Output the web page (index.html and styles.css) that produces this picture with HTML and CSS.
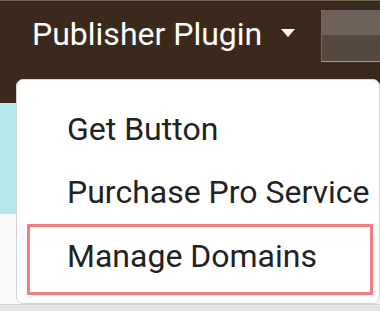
FILE: index.html
```html
<!DOCTYPE html>
<html lang="en">
<head>
  <meta charset="UTF-8" />
  <meta name="viewport" content="width=device-width, initial-scale=1" />
  <title>Publisher Plugin</title>
  <link rel="stylesheet" href="styles.css">
</head>
<body>
  <header class="topbar">
    <div class="title">
      <span>Publisher Plugin</span>
      <span class="caret"></span>
    </div>
    <div class="account"></div>
  </header>
  <main class="page">
    <div class="banner"></div>
    <div class="footer-strip"></div>
  </main>

  <nav class="dropdown">
    <a href="#" class="dropdown-item">Get Button</a>
    <a href="#" class="dropdown-item">Purchase Pro Service</a>
    <a href="#" class="dropdown-item highlighted">Manage Domains</a>
  </nav>
</body>
</html>
```

FILE: styles.css
```css
body {
  margin: 0;
  font-family: Roboto, "Liberation Sans", Arial, sans-serif;
  background: #fafafa;
  overflow: hidden;
}
.topbar {
  height: 103px;
  background-color: #3b2a1b;
  border-top: 1px solid #6e6257;
  display: flex;
  align-items: flex-start;
  padding: 9px 0 0 32px;
  box-sizing: border-box;
}
.title {
  display: flex;
  align-items: center;
  gap: 19px;
  color: #ffffff;
  font-size: 32px;
  line-height: 40px;
  margin-top: 4px;
}
.caret {
  width: 0;
  height: 0;
  border-left: 7px solid transparent;
  border-right: 7px solid transparent;
  border-top: 8px solid #ffffff;
  margin-top: -3px;
}
.account {
  margin-left: auto;
  width: 58px;
  height: 51px;
  background: linear-gradient(to bottom, #6d6259 0, #6d6259 50%, #55483d 50%, #55483d 100%);
  border-left: 1px solid #75695f;
  border-bottom: 1px solid #a39990;
}
.page {
  height: 208px;
  display: flex;
  flex-direction: column;
}
.banner {
  height: 111px;
  background-color: #b4e8ea;
}
.footer-strip {
  margin-top: auto;
  height: 6px;
  background-color: #e4e4e4;
  border-top: 1px solid #d2d2d2;
}
.dropdown {
  position: absolute;
  top: 79px;
  left: 16px;
  width: 364px;
  height: 225px;
  box-sizing: border-box;
  background-color: #ffffff;
  border: 1px solid #d4d4d4;
  border-radius: 7px;
  padding-top: 18px;
}
.dropdown-item {
  display: block;
  height: 63px;
  line-height: 63px;
  padding-left: 50px;
  font-size: 32px;
  color: #222222;
  text-decoration: none;
  white-space: nowrap;
}
.dropdown-item.highlighted {
  height: auto;
  line-height: 58px;
  padding: 0 0 7px 37px;
  margin: 0 6px 0 10px;
  border: 3px solid #f37d7d;
}
```
